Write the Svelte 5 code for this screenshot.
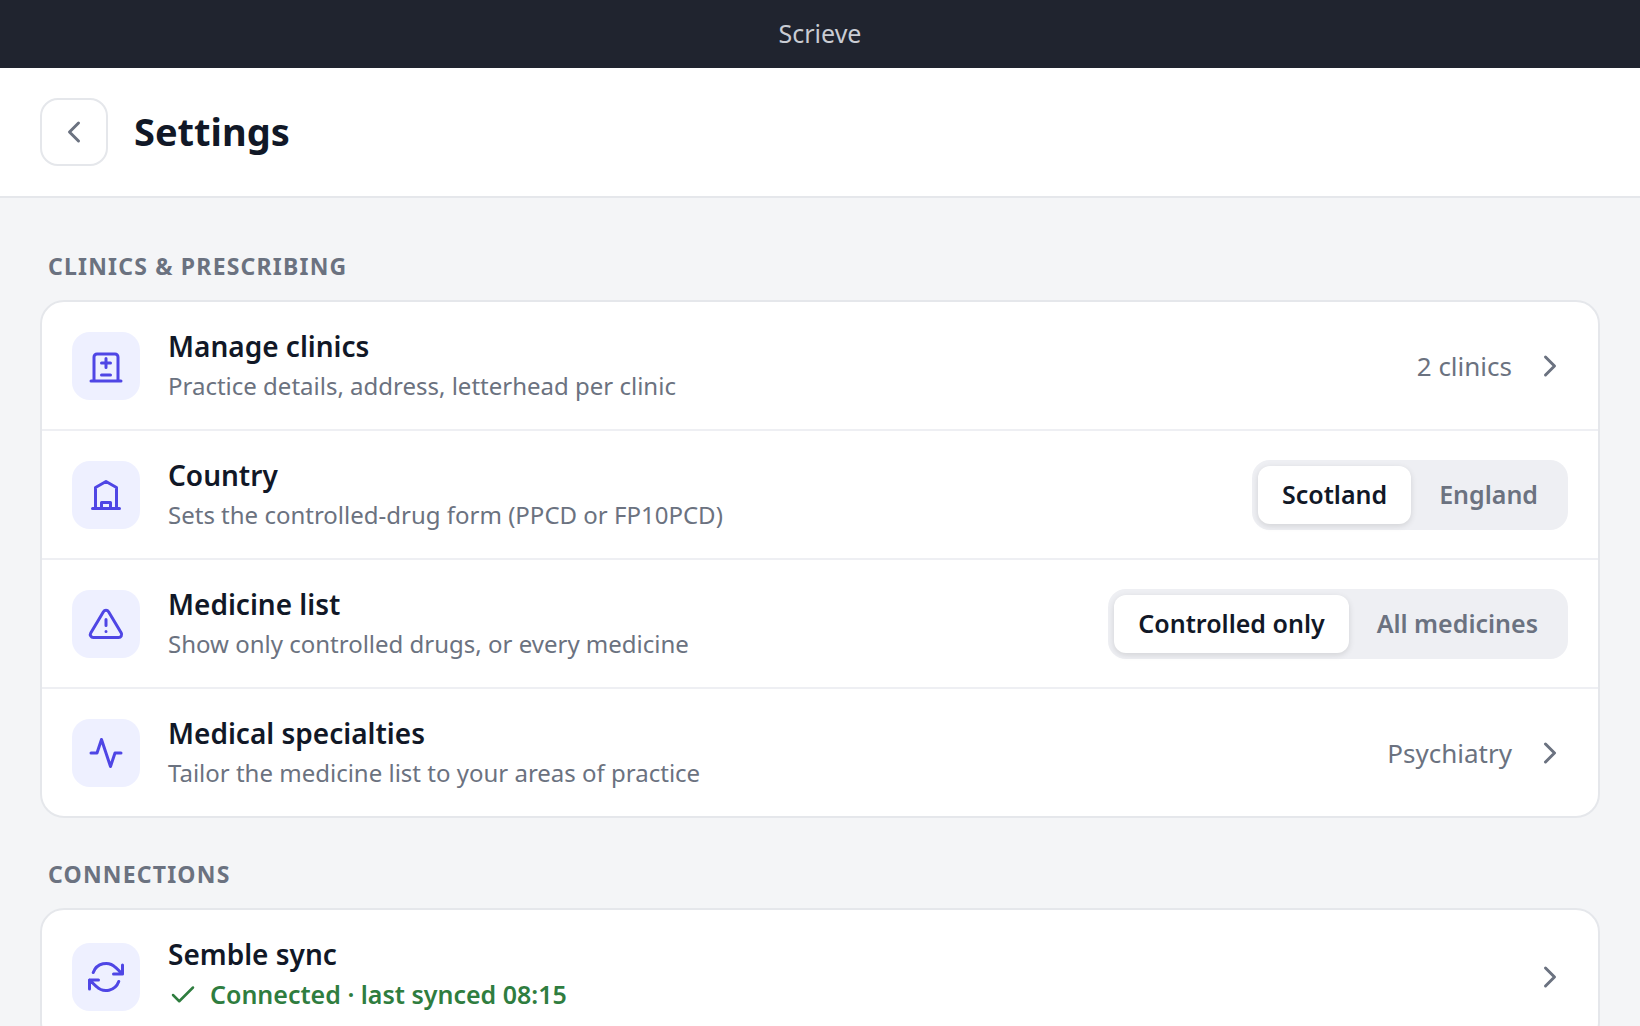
<script lang="ts">
  interface Row {
    icon: string;
    title: string;
    subtitle?: string;
    status?: string;
    value?: string;
    options?: string[];
    selected?: string;
  }

  interface Section {
    label: string;
    rows: Row[];
  }

  const icons: Record<string, string> = {
    clinic: "M4 22V6a2 2 0 0 1 2-2h12a2 2 0 0 1 2 2v16M2 22h20M12 7v6M9 10h6M9 18h6",
    building: "M3 21h18M5 21V7l7-4 7 4v14M9 21v-4h6v4",
    alert:
      "M10.29 3.86L1.82 18a2 2 0 0 0 1.71 3h16.94a2 2 0 0 0 1.71-3L13.71 3.86a2 2 0 0 0-3.42 0zM12 9v4M12 17h.01",
    activity: "M22 12h-4l-3 9L9 3l-3 9H2",
    sync: "M23 4v6h-6M1 20v-6h6M3.51 9a9 9 0 0 1 14.85-3.36L23 10M1 14l4.64 4.36A9 9 0 0 0 20.49 15",
  };

  let sections = $state<Section[]>([
    {
      label: "Clinics & prescribing",
      rows: [
        {
          icon: "clinic",
          title: "Manage clinics",
          subtitle: "Practice details, address, letterhead per clinic",
          value: "2 clinics",
        },
        {
          icon: "building",
          title: "Country",
          subtitle: "Sets the controlled-drug form (PPCD or FP10PCD)",
          options: ["Scotland", "England"],
          selected: "Scotland",
        },
        {
          icon: "alert",
          title: "Medicine list",
          subtitle: "Show only controlled drugs, or every medicine",
          options: ["Controlled only", "All medicines"],
          selected: "Controlled only",
        },
        {
          icon: "activity",
          title: "Medical specialties",
          subtitle: "Tailor the medicine list to your areas of practice",
          value: "Psychiatry",
        },
      ],
    },
    {
      label: "Connections",
      rows: [{ icon: "sync", title: "Semble sync", status: "Connected · last synced 08:15" }],
    },
  ]);
</script>

<div class="app">
  <div class="titlebar">Scrieve</div>

  <header class="header">
    <button class="back" aria-label="Back">
      <svg class="chevron" viewBox="0 0 24 24"><path d="M15 18l-6-6 6-6" /></svg>
    </button>
    <h1>Settings</h1>
  </header>

  <main class="content">
    {#each sections as section}
      <h2>{section.label}</h2>
      <div class="card">
        {#each section.rows as row}
          <div class="row">
            <span class="tile">
              <svg viewBox="0 0 24 24"><path d={icons[row.icon]} /></svg>
            </span>

            <div class="text">
              <div class="title">{row.title}</div>
              {#if row.status}
                <div class="status">
                  <svg viewBox="0 0 24 24"><path d="M20 6L9 17l-5-5" /></svg>
                  <span>{row.status}</span>
                </div>
              {:else}
                <div class="subtitle">{row.subtitle}</div>
              {/if}
            </div>

            {#if row.options}
              <div class="segmented" role="group" aria-label={row.title}>
                {#each row.options as option}
                  <button
                    class="segment"
                    class:segment--active={row.selected === option}
                    aria-pressed={row.selected === option}
                    onclick={() => (row.selected = option)}
                  >
                    {option}
                  </button>
                {/each}
              </div>
            {:else}
              <div class="link">
                {#if row.value}<span>{row.value}</span>{/if}
                <svg class="chevron" viewBox="0 0 24 24"><path d="M9 18l6-6-6-6" /></svg>
              </div>
            {/if}
          </div>
        {/each}
      </div>
    {/each}
  </main>
</div>

<style>
  :global(body) {
    margin: 0;
    background: #f4f5f7;
  }

  .app {
    height: 100vh;
    overflow: hidden;
    background: #f4f5f7;
    color: #111827;
    font-family: "Noto Sans", sans-serif;
  }

  svg {
    display: block;
    flex-shrink: 0;
    width: 36px;
    height: 36px;
    fill: none;
    stroke: currentColor;
    stroke-width: 2;
    stroke-linecap: round;
    stroke-linejoin: round;
  }

  button {
    font: inherit;
    border: none;
    cursor: pointer;
  }

  .chevron {
    color: #6b7280;
  }

  .titlebar {
    display: flex;
    align-items: center;
    justify-content: center;
    box-sizing: border-box;
    height: 68px;
    padding-bottom: 2px;
    background: #20242f;
    color: #c9ccd3;
    font-size: 25px;
    line-height: 34px;
  }

  /* Header */
  .header {
    display: flex;
    align-items: center;
    gap: 26px;
    padding: 30px 40px;
    background: #fff;
    border-bottom: 2px solid #e5e7eb;
  }

  .back {
    display: flex;
    align-items: center;
    justify-content: center;
    box-sizing: border-box;
    width: 68px;
    height: 68px;
    padding: 0;
    background: #fff;
    border: 2px solid #e5e7eb;
    border-radius: 18px;
  }

  h1 {
    margin: 0;
    padding-bottom: 2px;
    font-size: 38px;
    font-weight: 700;
    line-height: 52px;
  }

  .content {
    padding: 51px 40px 0;
  }

  h2 {
    margin: 0 8px 17px;
    font-size: 23px;
    font-weight: 700;
    line-height: 34px;
    letter-spacing: 1.2px;
    text-transform: uppercase;
    color: #6b7280;
  }

  .card {
    margin-bottom: 39px;
    background: #fff;
    border: 2px solid #e5e7eb;
    border-radius: 24px;
    overflow: hidden;
  }

  .row {
    display: flex;
    align-items: center;
    gap: 28px;
    padding: 25px 30px;
  }

  .row + .row {
    border-top: 2px solid #eeeff3;
  }

  .tile {
    display: flex;
    align-items: center;
    justify-content: center;
    flex-shrink: 0;
    width: 68px;
    height: 68px;
    border-radius: 18px;
    background: #eef0ff;
    color: #4f46e5;
  }

  .text {
    flex: 1;
    min-width: 0;
  }

  .title {
    font-size: 28px;
    font-weight: 600;
    line-height: 38px;
  }

  .subtitle {
    margin-top: 4px;
    padding-bottom: 2px;
    font-size: 24px;
    line-height: 33px;
    color: #6b7280;
  }

  .status {
    display: flex;
    align-items: center;
    gap: 12px;
    margin-top: 4px;
    padding-bottom: 8px;
    font-size: 25px;
    font-weight: 600;
    line-height: 34px;
    color: #2f7d3f;
  }

  .status svg {
    width: 30px;
    height: 30px;
    margin-top: 2px;
  }

  .link {
    display: flex;
    align-items: center;
    gap: 20px;
    font-size: 26px;
    color: #6b7280;
  }

  /* Segmented control */
  .segmented {
    display: flex;
    gap: 4px;
    padding: 6px;
    border-radius: 18px;
    background: #eeeff3;
  }

  .segment {
    height: 58px;
    padding: 0 24px 2px;
    border-radius: 12px;
    background: transparent;
    color: #6b7280;
    font-size: 25px;
    font-weight: 600;
  }

  .segment--active {
    background: #fff;
    color: #111827;
    box-shadow: 0 2px 6px rgba(0, 0, 0, 0.12);
  }
</style>
